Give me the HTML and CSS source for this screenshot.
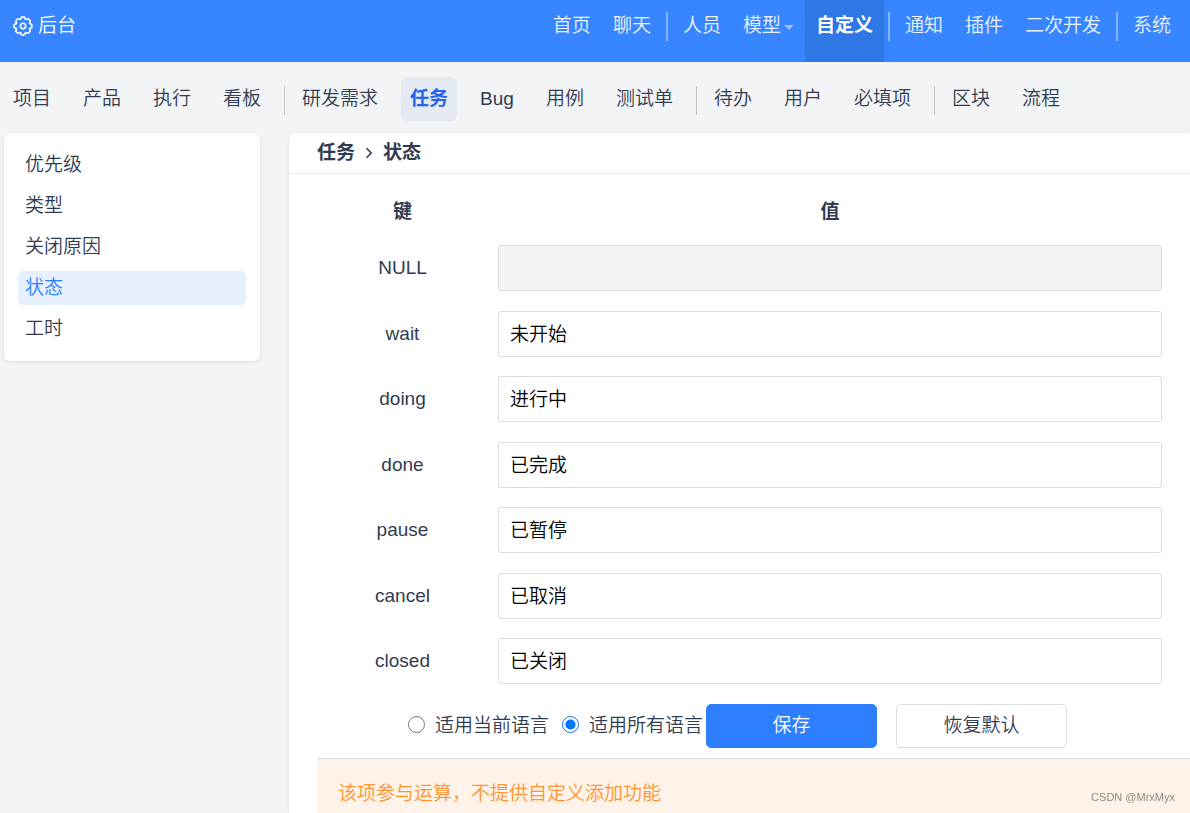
FILE: index.html
```
<!DOCTYPE html>
<html lang="zh-CN">
<head>
<meta charset="utf-8">
<title>后台 - 自定义</title>
<link rel="stylesheet" href="styles.css">
</head>
<body>
<header class="topbar">
  <a class="brand" href="#">
    <svg class="brand-icon" viewBox="-0.3 -0.3 20.6 20.6" fill="none" stroke="currentColor" stroke-width="1.7" stroke-linejoin="round" aria-hidden="true">
      <path d="M8.56.91 11.44.91 12.64 3.23 15.41 2.56 17.44 4.59 16.77 7.36 19.09 8.56V11.44L16.77 12.64 17.44 15.41 15.41 17.44 12.64 16.77 11.44 19.09H8.56L7.36 16.77 4.59 17.44 2.56 15.41 3.23 12.64.91 11.44V8.56L3.23 7.36 2.56 4.59 4.59 2.56 7.36 3.23Z"/>
      <circle cx="10" cy="10" r="2.8"/>
    </svg>
    <span>后台</span>
  </a>
  <nav class="topnav">
    <a href="#">首页</a>
    <a href="#">聊天</a>
    <i class="top-divider"></i>
    <a href="#">人员</a>
    <a href="#">模型<span class="caret"></span></a>
    <a href="#" class="active">自定义</a>
    <i class="top-divider"></i>
    <a href="#">通知</a>
    <a href="#">插件</a>
    <a href="#">二次开发</a>
    <i class="top-divider"></i>
    <a href="#">系统</a>
  </nav>
</header>

<nav class="subnav">
  <a href="#">项目</a>
  <a href="#">产品</a>
  <a href="#">执行</a>
  <a href="#">看板</a>
  <i class="sub-divider"></i>
  <a href="#">研发需求</a>
  <a href="#" class="active">任务</a>
  <a href="#">Bug</a>
  <a href="#">用例</a>
  <a href="#">测试单</a>
  <i class="sub-divider"></i>
  <a href="#">待办</a>
  <a href="#">用户</a>
  <a href="#">必填项</a>
  <i class="sub-divider"></i>
  <a href="#">区块</a>
  <a href="#">流程</a>
</nav>

<div class="layout">
  <aside class="sidebar">
    <a href="#">优先级</a>
    <a href="#">类型</a>
    <a href="#">关闭原因</a>
    <a href="#" class="active">状态</a>
    <a href="#">工时</a>
  </aside>

  <main class="panel">
    <h1 class="panel-heading">
      <span>任务</span>
      <svg class="chevron" viewBox="0 0 8 12" fill="none" stroke="currentColor" stroke-width="1.6" aria-hidden="true"><path d="M1.5 1.2 6.2 6 1.5 10.8"/></svg>
      <span>状态</span>
    </h1>
    <form class="form">
      <table class="fields">
        <thead>
          <tr><th class="key">键</th><th>值</th></tr>
        </thead>
        <tbody>
          <tr><td class="key"><label for="v-null">NULL</label></td><td><input id="v-null" type="text" readonly class="readonly"></td></tr>
          <tr><td class="key"><label for="v-wait">wait</label></td><td><input id="v-wait" type="text" value="未开始"></td></tr>
          <tr><td class="key"><label for="v-doing">doing</label></td><td><input id="v-doing" type="text" value="进行中"></td></tr>
          <tr><td class="key"><label for="v-done">done</label></td><td><input id="v-done" type="text" value="已完成"></td></tr>
          <tr><td class="key"><label for="v-pause">pause</label></td><td><input id="v-pause" type="text" value="已暂停"></td></tr>
          <tr><td class="key"><label for="v-cancel">cancel</label></td><td><input id="v-cancel" type="text" value="已取消"></td></tr>
          <tr><td class="key"><label for="v-closed">closed</label></td><td><input id="v-closed" type="text" value="已关闭"></td></tr>
        </tbody>
      </table>
      <div class="actions">
        <label class="choice"><input type="radio" name="lang"><span>适用当前语言</span></label>
        <label class="choice"><input type="radio" name="lang" checked><span>适用所有语言</span></label>
        <button type="submit" class="btn primary">保存</button>
        <button type="button" class="btn">恢复默认</button>
      </div>
    </form>
    <p class="notice">该项参与运算，不提供自定义添加功能</p>
  </main>
</div>
<div class="watermark">CSDN @MrxMyx</div>
</body>
</html>
```
FILE: styles.css
```
* {
  box-sizing: border-box;
}

body {
  margin: 0;
  min-height: 100vh;
  display: flex;
  flex-direction: column;
  background: #f3f4f6;
  color: #313c52;
  font: 350 19px/28px "Liberation Sans", "Noto Sans CJK SC", sans-serif;
}

a {
  color: inherit;
  text-decoration: none;
  white-space: nowrap;
}

/* Top bar */
.topbar {
  display: flex;
  justify-content: space-between;
  height: 62px;
  padding: 0 8px 0 13px;
  background: #3785ff;
  color: #fff;
}

.brand {
  display: flex;
  align-items: center;
  gap: 5px;
  padding-bottom: 10px;
}

.brand-icon {
  width: 20px;
  height: 20px;
}

.topnav {
  display: flex;
  color: #ebf3ff;
}

.topnav a {
  display: flex;
  align-items: center;
  padding: 0 11px 10px;
}

.topnav .active {
  background: #3077e6;
  color: #fff;
  font-weight: 700;
}

.top-divider {
  width: 2px;
  height: 29px;
  margin: 12px 4px 0;
  background: #87b6ff;
}

.caret {
  margin: 2px 0 0 3px;
  border: 5px solid transparent;
  border-top-color: #9bc2ff;
  border-bottom: 0;
}

/* Second level navigation */
.subnav {
  display: flex;
  align-items: center;
  height: 71px;
  padding: 3px 4px 0;
}

.subnav a {
  padding: 8px 9px;
  border-radius: 6px;
}

.subnav a + a {
  margin-left: 14px;
}

.subnav .active {
  background: #e5eaf2;
  color: #2463eb;
  font-weight: 700;
}

.sub-divider {
  width: 1px;
  height: 29px;
  margin: 2px 8px 0 14px;
  background: #c1c4ca;
}

/* Page body */
.layout {
  flex: 1;
  display: flex;
  align-items: stretch;
  gap: 29px;
  padding-left: 4px;
}

.sidebar {
  flex: none;
  align-self: flex-start;
  display: flex;
  flex-direction: column;
  gap: 7px;
  width: 256px;
  padding: 15px 14px;
  border-radius: 6px;
  background: #fff;
  box-shadow: 0 1px 4px rgba(0, 0, 0, 0.1);
}

.sidebar a {
  padding: 3px 7px;
  border-radius: 6px;
}

.sidebar .active {
  background: #e6f0ff;
  color: #2e7fff;
}

.panel {
  flex: 1;
  display: flex;
  flex-direction: column;
  min-width: 0;
  border-radius: 6px 0 0 0;
  background: #fff;
  box-shadow: 0 1px 4px rgba(0, 0, 0, 0.1);
}

.panel-heading {
  display: flex;
  align-items: center;
  gap: 10px;
  margin: 0;
  padding: 6px 28px;
  border-bottom: 1px solid #ececee;
  font-size: 19px;
  font-weight: 700;
}

.chevron {
  width: 8px;
  height: 12px;
}

.form {
  padding: 0 18px 10px 28px;
}

.fields {
  width: 100%;
  border-collapse: collapse;
  table-layout: fixed;
}

.fields th {
  padding: 24px 10px 9px;
  font-weight: 700;
}

.fields td {
  padding: 10px;
}

/* Rows average 65.5px */
.fields tbody tr:nth-child(even) td {
  padding-bottom: 9px;
}

.fields .key {
  width: 171px;
  text-align: center;
}

.fields input {
  display: block;
  width: 100%;
  height: 46px;
  padding: 0 11px 3px;
  border: 1px solid #dbdcdf;
  border-radius: 3px;
  background: #fff;
  color: #000;
  font: inherit;
}

.fields .readonly {
  background: #f4f4f4;
}

.actions {
  display: flex;
  align-items: center;
  padding: 10px 0 0 91px;
}

.choice {
  display: flex;
  align-items: center;
  white-space: nowrap;
}

.choice + .choice {
  margin-left: 13px;
}

.choice input {
  width: 17px;
  height: 17px;
  margin: 0 10px 3px 0;
}

.btn {
  width: 171px;
  height: 44px;
  padding: 0;
  border: 1px solid #dbdcdf;
  border-radius: 5px;
  background: #fff;
  color: inherit;
  font: inherit;
}

.btn.primary {
  margin: 0 19px 0 3px;
  border-color: #2e7fff;
  background: #2e7fff;
  color: #fff;
}

.notice {
  flex: 1;
  margin: 0 0 0 28px;
  padding: 21px 21px 0;
  border-top: 1px solid #dbdcdf;
  background: #fff3e9;
  color: #ff9331;
}

.watermark {
  position: fixed;
  right: 15px;
  bottom: 8px;
  color: #8f8a86;
  font-size: 11px;
  line-height: 16px;
}
```
